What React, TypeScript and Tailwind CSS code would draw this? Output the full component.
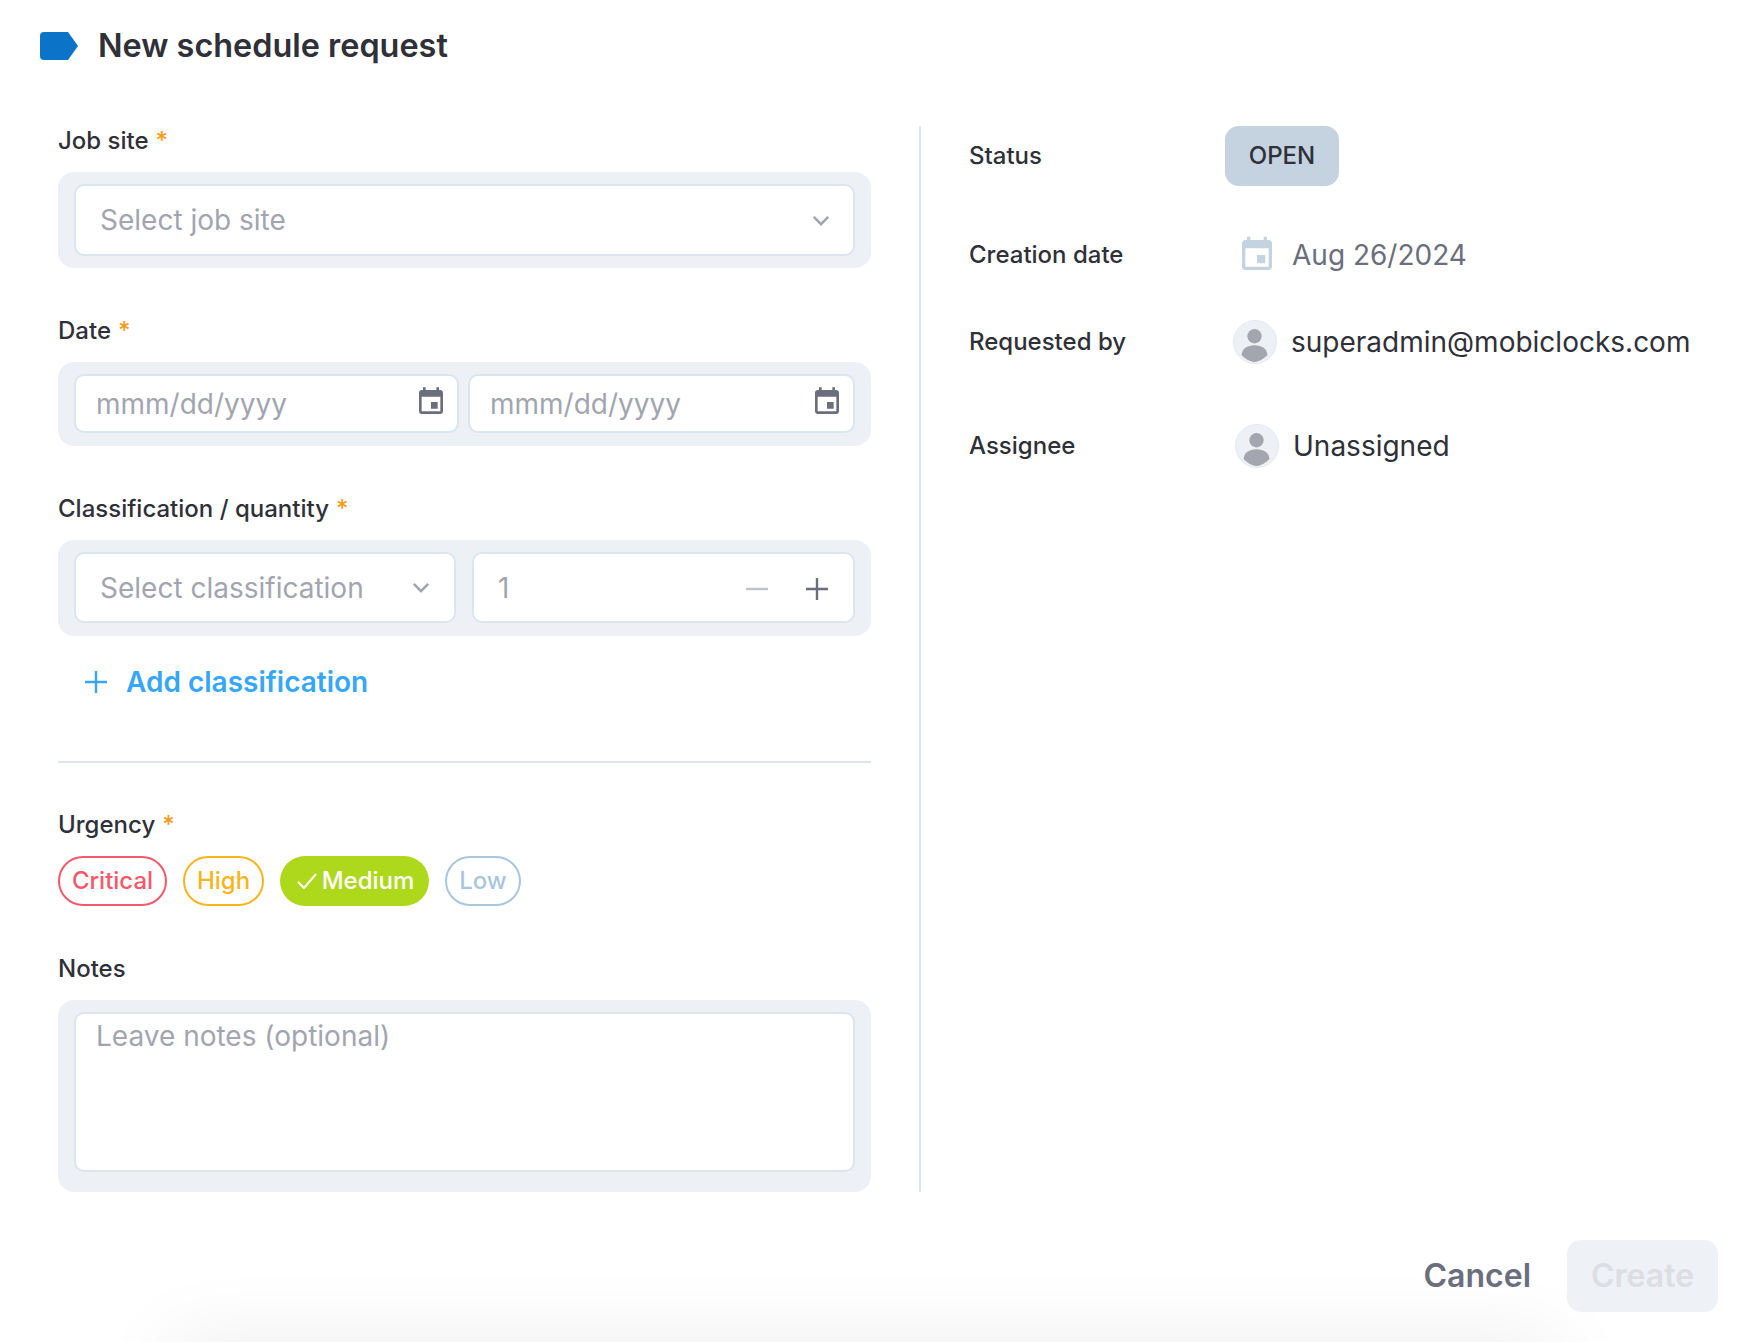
import React from "react";

const font = { fontFamily: "Inter, 'Liberation Sans', sans-serif" };

function CalIcon({ className }: { className: string }) {
  return (
    <svg viewBox="0 0 24 24" className={className} fill="currentColor">
      <path d="M17 12h-5v5h5v-5zM16 1v2H8V1H6v2H5c-1.11 0-1.99.9-1.99 2L3 19c0 1.1.89 2 2 2h14c1.1 0 2-.9 2-2V5c0-1.1-.9-2-2-2h-1V1h-2zm3 18H5V8h14v11z" />
    </svg>
  );
}

function Chevron() {
  return (
    <svg viewBox="0 0 20 12" className="w-[18px] h-[11px] text-[#a2a5b0]" fill="none" stroke="currentColor" strokeWidth="2.8">
      <path d="M2 2l8 8 8-8" />
    </svg>
  );
}

function Avatar({ className }: { className: string }) {
  return (
    <div className={"w-[44px] h-[44px] rounded-full bg-[#edf1f6] border border-[#e3e9f1] overflow-hidden shrink-0 " + className}>
      <svg viewBox="0 0 44 44" className="w-full h-full" fill="#a3a6af">
        <circle cx="21.500" cy="16" r="7.500" />
        <path d="M8 36c0-7 6-10.500 13.500-10.500S35 29 35 36c-3.500 3-8.500 7-13.500 7S11 39 8 36z" />
      </svg>
    </div>
  );
}

function Label({ text, req, className }: { text: string; req?: boolean; className?: string }) {
  return (
    <div className={"text-[24px] leading-[30px] font-medium text-[#2f3038] " + (className ?? "")}>
      {text}
      {req && <span className="text-[#f39c1c] ml-[7px]">*</span>}
    </div>
  );
}

const box = "bg-white border-2 border-[#dbe5ee] rounded-[10px]";
const ph = "text-[28px] text-[#a2a5b0]";

function DateField({ className }: { className: string }) {
  return (
    <div className={box + " h-[59px] flex items-center justify-between pl-[20px] pr-[10px] " + className}>
      <input placeholder="mmm/dd/yyyy" className="w-[300px] text-[28px] outline-none placeholder:text-[#a2a5b0]" />
      <CalIcon className="w-[32px] h-[32px] text-[#6b6e7c] -mt-[3px]" />
    </div>
  );
}

export default function App() {
  return (
    <div style={font} className="relative w-[1744px] h-[1342px] bg-white overflow-hidden">
      <div className="absolute left-[170px] right-[184px] top-[1342px] h-[60px] shadow-[0_0_80px_rgba(0,0,0,0.08)]" />
      <div className="relative pt-[32px]">
        <div className="flex items-center h-[28px] pl-[40px]">
          <svg viewBox="0 0 38 28" className="w-[38px] h-[28px] shrink-0">
            <path d="M4 0h24l10 14-10 14H4a4 4 0 0 1-4-4V4a4 4 0 0 1 4-4z" fill="#0b74c9" />
          </svg>
          <div className="ml-[20px] text-[32.400px] font-semibold text-[#2f3038] whitespace-nowrap">New schedule request</div>
        </div>

        <div className="flex mt-[66px]">
          <div className="ml-[58px] w-[813px] h-[1066px] shrink-0">
            <Label text="Job site" req />
            <div className="mt-[16px] bg-[#edf1f6] rounded-[16px] h-[96px] px-[16px] py-[12px]">
              <div className={box + " h-full flex items-center justify-between pl-[24px] pr-[23px]"}>
                <span className={ph}>Select job site</span>
                <Chevron />
              </div>
            </div>

            <Label text="Date" req className="mt-[48px]" />
            <div className="mt-[16px] bg-[#edf1f6] rounded-[16px] h-[84px] px-[16px] pt-[12px] flex gap-[9px]">
              <DateField className="w-[385px]" />
              <DateField className="w-[387px]" />
            </div>

            <Label text="Classification / quantity" req className="mt-[48px]" />
            <div className="mt-[16px] bg-[#edf1f6] rounded-[16px] h-[96px] px-[16px] pt-[12px] flex gap-[16px]">
              <div className={box + " w-[382px] h-[71px] flex items-center justify-between pl-[24px] pr-[24px]"}>
                <span className={ph}>Select classification</span>
                <Chevron />
              </div>
              <div className={box + " flex-1 h-[71px] flex items-center pl-[24px] pr-[25px]"}>
                <span className={ph}>1</span>
                <svg viewBox="0 0 22 22" className="w-[22px] h-[22px] ml-auto mt-[2px]" stroke="#c0c2c9" strokeWidth="2.400">
                  <path d="M0 11h22" />
                </svg>
                <svg viewBox="0 0 22 22" className="w-[22px] h-[22px] ml-[38px] mt-[2px]" stroke="#6b6e7c" strokeWidth="2.400">
                  <path d="M0 11h22M11 0v22" />
                </svg>
              </div>
            </div>

            <div className="mt-[30px] h-[32px] flex items-center pl-[27px] text-[#36a6f7]">
              <svg viewBox="0 0 22 22" className="w-[22px] h-[22px]" stroke="currentColor" strokeWidth="2.400">
                <path d="M0 11h22M11 0v22" />
              </svg>
              <span className="ml-[19px] text-[28px] font-semibold whitespace-nowrap">Add classification</span>
            </div>

            <div className="mt-[63px] h-[2px] bg-[#dbe5ee]" />

            <Label text="Urgency" req className="mt-[47px]" />
            <div className="mt-[16px] flex gap-[16px] text-[24px] font-medium">
              <div className="h-[50px] w-[109px] flex items-center justify-center rounded-full border-2 border-[#f4596b] text-[#f4596b]">Critical</div>
              <div className="h-[50px] w-[81px] flex items-center justify-center rounded-full border-2 border-[#f6b51d] text-[#f6b51d]">High</div>
              <div className="h-[50px] w-[149px] pl-[2px] flex items-center justify-center rounded-full bg-[#aed81b] text-white">
                <svg viewBox="0 0 20 16" className="w-[20px] h-[16px] mr-[5px]" fill="none" stroke="white" strokeWidth="2">
                  <path d="M1 9l6 6L19 1" />
                </svg>
                Medium
              </div>
              <div className="h-[50px] w-[76px] flex items-center justify-center rounded-full border-2 border-[#a9c6dd] text-[#a9c6dd]">Low</div>
            </div>

            <Label text="Notes" className="mt-[48px]" />
            <div className="mt-[16px] bg-[#edf1f6] rounded-[16px] h-[192px] px-[16px] pt-[12px]">
              <textarea
                placeholder="Leave notes (optional)"
                className={box + " block w-full h-[160px] pl-[20px] pt-[2px] text-[28px] leading-[40px] outline-none resize-none placeholder:text-[#a2a5b0]"}
              />
            </div>
          </div>

          <div className="ml-[48px] w-[2px] h-[1066px] bg-[#dbe5ee] shrink-0" />

          <div className="ml-[48px] flex-1 text-[24px]">
            <div className="flex items-center h-[60px]">
              <div className="w-[256px] font-medium text-[#2f3038]">Status</div>
              <div className="w-[114px] h-[60px] rounded-[14px] bg-[#c5d3e1] flex items-center justify-center font-medium text-[#2f3038]">OPEN</div>
            </div>
            <div className="flex items-center h-[40px] mt-[49px]">
              <div className="w-[256px] font-medium text-[#2f3038]">Creation date</div>
              <CalIcon className="w-[40px] h-[40px] ml-[12px] text-[#c5d3e1]" />
              <span className="ml-[15px] text-[28px] text-[#6b6e7c]">Aug 26/2024</span>
            </div>
            <div className="flex items-center h-[44px] mt-[45px]">
              <div className="w-[256px] font-medium text-[#2f3038]">Requested by</div>
              <Avatar className="ml-[8px]" />
              <span className="ml-[14px] text-[28px] text-[#2f3038] whitespace-nowrap">superadmin@mobiclocks.com</span>
            </div>
            <div className="flex items-center h-[44px] mt-[60px]">
              <div className="w-[256px] font-medium text-[#2f3038]">Assignee</div>
              <Avatar className="ml-[10px]" />
              <span className="ml-[14px] text-[28px] text-[#2f3038]">Unassigned</span>
            </div>
          </div>
        </div>

        <div className="flex justify-end items-center mt-[48px] pr-[26px]">
          <span className="text-[32px] font-semibold text-[#6b6e7c] mr-[36px]">Cancel</span>
          <div className="w-[151px] h-[72px] rounded-[14px] bg-[#eef1f6] flex items-center justify-center text-[32px] font-semibold text-[#dcdee3]">Create</div>
        </div>
      </div>
    </div>
  );
}
